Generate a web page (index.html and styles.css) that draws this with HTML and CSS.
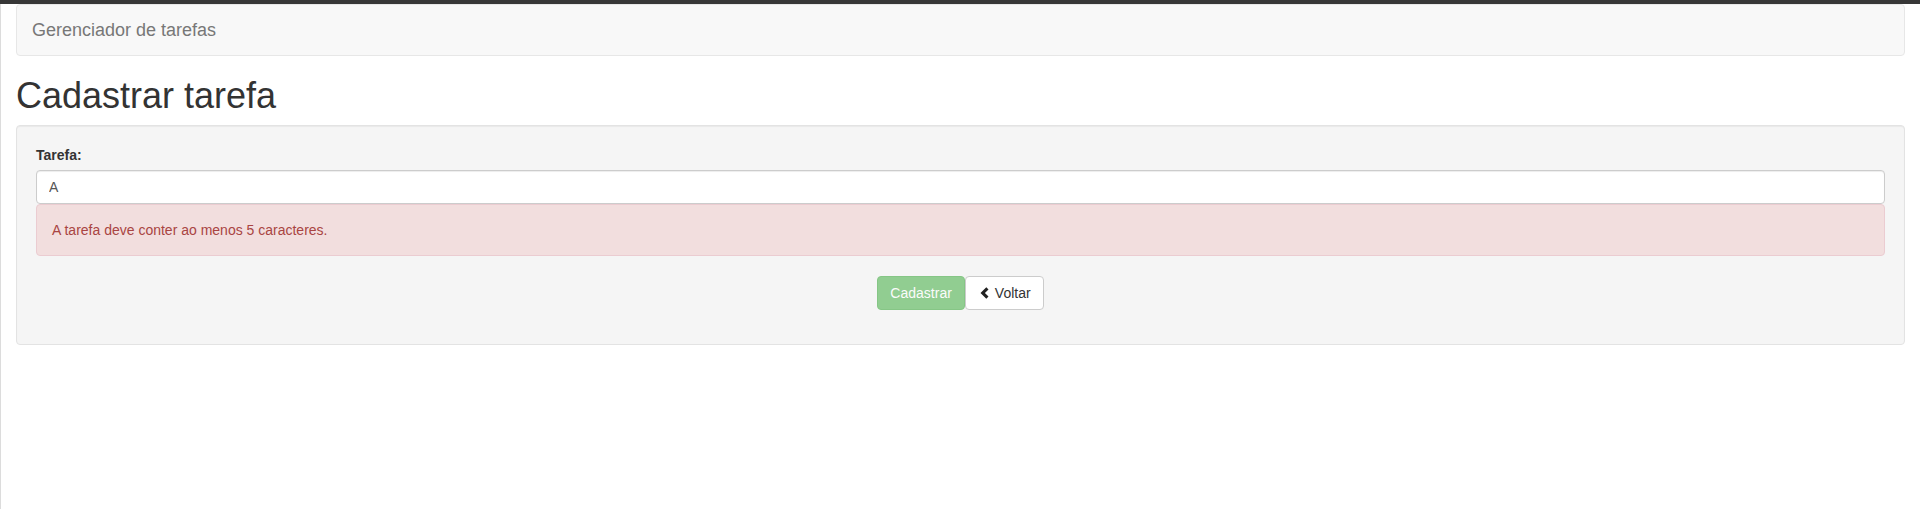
FILE: index.html
```html
<!DOCTYPE html>
<html lang="pt-BR">
<head>
<meta charset="utf-8">
<title>Cadastrar tarefa</title>
<link rel="stylesheet" href="styles.css">
</head>
<body>
<div class="topbar"></div>
<div class="page">
  <div class="container">
    <nav class="navbar">
      <span class="navbar-brand">Gerenciador de tarefas</span>
    </nav>
    <h1 class="title">Cadastrar tarefa</h1>
    <div class="well">
      <form class="form">
        <div class="form-group">
          <label class="label" for="tarefa">Tarefa:</label>
          <input class="form-control" id="tarefa" type="text" value="A">
          <div class="alert">A tarefa deve conter ao menos 5 caracteres.</div>
        </div>
        <div class="actions">
          <button class="btn btn-success" type="button" disabled>Cadastrar</button>
          <button class="btn btn-default" type="button">
            <svg class="icon" width="13" height="14" viewBox="0 0 13 14" aria-hidden="true"><polygon points="2.5,7 8.3,1.2 10.5,3.4 6.9,7 10.5,10.6 8.3,12.8" fill="#222"/></svg>
            <span>Voltar</span>
          </button>
        </div>
      </form>
    </div>
  </div>
</div>
</body>
</html>
```

FILE: styles.css
```css
* { box-sizing: border-box; }
html, body {
  margin: 0;
  padding: 0;
  background: #fff;
}
body {
  font-family: "Liberation Sans", Arial, Helvetica, sans-serif;
  font-size: 14px;
  line-height: 20px;
  color: #333;
  height: 509px;
  display: flex;
  flex-direction: column;
}
.topbar {
  height: 4px;
  background: #373737;
  flex: none;
}
.page {
  flex: 1;
  border-left: 1px solid #dcdcdc;
}
.container {
  padding: 0 15px;
}
.navbar {
  height: 52px;
  background: #f8f8f8;
  border: 1px solid #e7e7e7;
  border-radius: 4px;
  margin-bottom: 20px;
  display: flex;
}
.navbar-brand {
  padding: 15px;
  font-size: 18px;
  line-height: 20px;
  color: #777;
}
.title {
  margin: 20px 0 10px;
  font-size: 36px;
  line-height: 39px;
  font-weight: 500;
  color: #333;
}
.well {
  background: #f5f5f5;
  border: 1px solid #e3e3e3;
  border-radius: 4px;
  padding: 19px;
  box-shadow: inset 0 1px 1px rgba(0,0,0,.05);
}
.form { margin: 0; }
.form-group {
  display: flex;
  flex-direction: column;
  margin-bottom: 20px;
}
.label {
  display: block;
  font-weight: bold;
  margin-bottom: 5px;
}
.form-control {
  display: block;
  width: 100%;
  height: 34px;
  padding: 6px 12px;
  font-family: inherit;
  font-size: 14px;
  line-height: 20px;
  color: #555;
  background: #fff;
  border: 1px solid #ccc;
  border-radius: 4px;
  box-shadow: inset 0 1px 1px rgba(0,0,0,.075);
  margin: 0;
}
.alert {
  padding: 15px;
  border: 1px solid #ebccd1;
  border-radius: 4px;
  background: #f2dede;
  color: #a94442;
}
.actions {
  display: flex;
  justify-content: center;
  margin-bottom: 15px;
}
.btn {
  display: inline-flex;
  align-items: center;
  height: 34px;
  padding: 6px 12px;
  font-family: inherit;
  font-size: 14px;
  line-height: 20px;
  border: 1px solid transparent;
  border-radius: 4px;
  margin: 0;
  cursor: pointer;
}
.btn-success {
  color: #fff;
  background: #5cb85c;
  border-color: #4cae4c;
  opacity: .65;
  cursor: not-allowed;
}
.btn-default {
  color: #333;
  background: #fff;
  border-color: #ccc;
}
.icon {
  display: block;
  margin-right: 4px;
}
```
